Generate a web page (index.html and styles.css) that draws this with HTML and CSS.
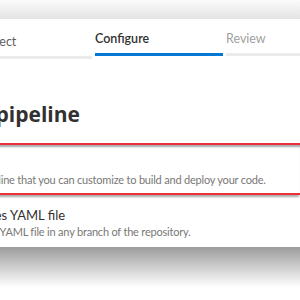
FILE: index.html
```html
<!DOCTYPE html>
<html lang="en">
<head>
    <meta charset="UTF-8">
    <meta name="viewport" content="width=device-width, initial-scale=1.0">
    <title>New pipeline - Configure</title>
    <link rel="stylesheet" href="styles.css">
</head>
<body>

<div class="shade-top"></div>

<div class="card">
    <div class="wizard-tabs">
        <div class="tab done"><span class="tab-label">Connect</span><span class="tab-bar"></span></div>
        <div class="tab done prev"><span class="tab-label">Select</span><span class="tab-bar"></span></div>
        <div class="tab active"><span class="tab-label">Configure</span><span class="tab-bar"></span></div>
        <div class="tab"><span class="tab-label">Review</span><span class="tab-bar"></span></div>
    </div>

    <h1 class="page-title">Configure your pipeline</h1>

    <div class="options">
        <div class="option highlight">
            <div class="option-name">Starter pipeline</div>
            <div class="option-desc first">Start with a minimal pipeline that you can customize to build and deploy your code.</div>
        </div>
        <div class="option">
            <div class="option-name second">Existing Azure Pipelines YAML file</div>
            <div class="option-desc">Select an Azure Pipelines YAML file in any branch of the repository.</div>
        </div>
    </div>
</div>

<div class="shade-bottom"></div>

</body>
</html>
```

FILE: styles.css
```css
body {
    margin: 0;
    background: #fff;
    font-family: Lato, "Open Sans", sans-serif;
    color: #323130;
    overflow: hidden;
    width: 300px;
    height: 300px;
}
.shade-top {
    height: 19px;
    background: linear-gradient(#fbfbfb, #e3e3e3);
}
.card {
    background: #fff;
    white-space: nowrap;
}

/* wizard steps */
.wizard-tabs {
    display: grid;
    grid-template-columns: 128px 109px 128px 1fr;
    column-gap: 3px;
    margin-left: -148px;
}
.tab {
    display: flex;
    flex-direction: column;
    padding-top: 12px;
}
.tab-label {
    font-size: 12.5px;
    line-height: 16px;
    color: #a19f9d;
}
.tab-bar {
    height: 3px;
    margin-top: 6px;
    background: #ebebeb;
}
.tab.done .tab-label {
    color: #605e5c;
}
.tab.prev {
    margin-top: 3px; /* la captura esta un poco inclinada aqui */
    margin-bottom: -3px;
}
.tab.active .tab-label {
    color: #323130;
    font-weight: 600;
}
.tab.active .tab-bar {
    background: #0078d4;
}

.page-title {
    margin: 44px 0 0 -166px;
    font-family: "Open Sans", sans-serif;
    font-size: 21px;
    line-height: 28px;
    font-weight: 700;
}

/* opciones */
.options {
    margin-top: 15px;
    margin-left: -118px;
}
.option {
    padding: 12px 0 7px;
}
.option.highlight {
    padding: 10px 0 5px;
    border-top: 2px solid #e8323a;
    border-bottom: 2px solid #e8323a;
    box-shadow: 0 3px 2px -1px #a8a8a8, inset 0 3px 2px -1px #a8a8a8;
}
.option-name {
    font-size: 13px;
    line-height: 17px;
}
.option-name.second {
    margin-left: -10px;
}
.option-desc {
    font-size: 11px;
    line-height: 16px;
    letter-spacing: -0.2px;
    color: #797775;
}
.option-desc.first {
    margin-left: 2px;
}

.shade-bottom {
    height: 40px;
    background: linear-gradient(#9c9c9c, #fff);
}
```
